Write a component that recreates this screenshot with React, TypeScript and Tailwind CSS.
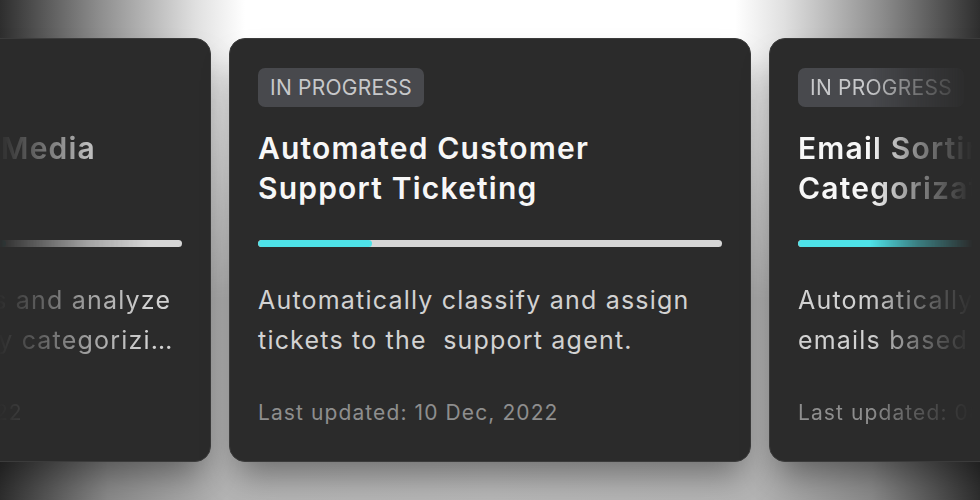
import React from "react";

type Project = {
  status: string;
  title: string[];
  progress: number;
  description: string[];
  updated: string;
};

const projects: Project[] = [
  {
    status: "In progress",
    title: ["Monitoring Social Media", ""],
    progress: 62,
    description: [
      "Track all social replies and analyze",
      "customer sentiment by categorizi…",
    ],
    updated: "Last updated: 02 Dec, 2022",
  },
  {
    status: "In progress",
    title: ["Automated Customer", "Support Ticketing"],
    progress: 24.5,
    description: [
      "Automatically classify and assign",
      "tickets to the\u00a0 support agent.",
    ],
    updated: "Last updated: 10 Dec, 2022",
  },
  {
    status: "In progress",
    title: ["Email Sorting and", "Categorization"],
    progress: 58,
    description: ["Automatically sort incoming", "emails based on their content."],
    updated: "Last updated: 08 Dec, 2022",
  },
];

// side cards fade out towards the edge of the viewport
const fade = {
  left: "[mask-image:linear-gradient(to_right,transparent_280px,rgba(0,0,0,0.3)_320px,rgba(0,0,0,0.7)_370px,black_430px)]",
  center: "",
  right:
    "[mask-image:linear-gradient(to_right,black_72px,rgba(0,0,0,0.45)_120px,transparent_175px)]",
};

function ProjectCard({
  project,
  side,
}: {
  project: Project;
  side: "left" | "center" | "right";
}) {
  return (
    <div className="w-[522px] h-[424px] shrink-0 rounded-[16px] bg-[#2b2b2b] border border-[#3b3b3b] shadow-[0_20px_34px_-8px_rgba(0,0,0,0.4)] px-[28px] pt-[29px]">
      <div className={fade[side]}>
        <span className="inline-flex h-[39px] items-center rounded-[7px] bg-[#48494d] px-[12px] text-[21px] uppercase tracking-[0.25px] text-[#c7c8ca]">
          {project.status}
        </span>
        <h2 className="mt-[21px] h-[80px] text-[30px] font-semibold leading-[40px] tracking-[1.2px] text-[#f7f7f7]">
          {project.title.map((line, i) => (
            <div key={i} className="h-[40px] whitespace-nowrap">
              {line}
            </div>
          ))}
        </h2>
        <div className="mt-[32px] h-[7px] w-full overflow-hidden rounded-full bg-[#d6d6d6]">
          <div
            className="h-full rounded-full bg-[#4ee2e8]"
            style={{ width: `${project.progress}%` }}
          />
        </div>
        <div className="mt-[33px] text-[25px] leading-[40px] tracking-[1.2px] text-[#d2d2d2]">
          {project.description.map((line, i) => (
            <div key={i} className="whitespace-nowrap">
              {line}
            </div>
          ))}
        </div>
        <div className="mt-[38px] text-[21px] leading-[30px] tracking-[1.1px] text-[#8e8e8e]">
          {project.updated}
        </div>
      </div>
    </div>
  );
}

export default function App() {
  return (
    <div className="relative h-[500px] w-[980px] overflow-hidden font-['Inter','Noto_Sans',sans-serif] bg-[linear-gradient(to_right,#2e2e2e_0%,#8a8a8a_11%,#b4b4b4_23%,#b8b8b8_50%,#b4b4b4_77%,#8a8a8a_89%,#2e2e2e_100%)]">
      <div className="absolute inset-0 bg-[linear-gradient(to_right,#2e2e2e_0%,#8c8c8c_10%,#e0e0e0_20%,#ffffff_25%,#ffffff_75%,#e0e0e0_80%,#8c8c8c_90%,#2e2e2e_100%)] [mask-image:linear-gradient(to_bottom,black_0%,black_12%,transparent_60%)]" />
      <div className="relative ml-[-311px] flex items-start gap-[18px] pt-[38px]">
        <ProjectCard project={projects[0]} side="left" />
        <ProjectCard project={projects[1]} side="center" />
        <ProjectCard project={projects[2]} side="right" />
      </div>
    </div>
  );
}
